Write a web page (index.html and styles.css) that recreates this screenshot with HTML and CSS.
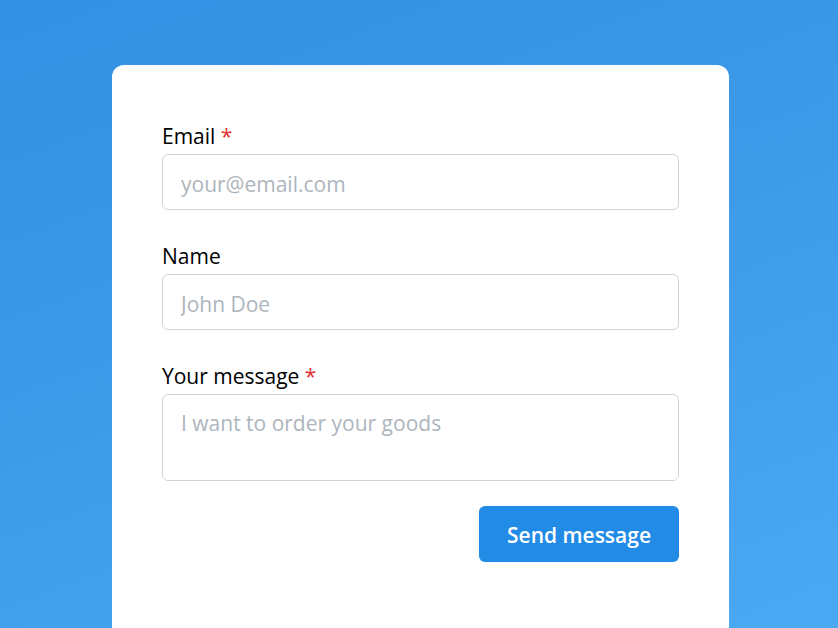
FILE: index.html
```html
<!DOCTYPE html>
<html lang="en">
<head>
<meta charset="utf-8">
<title>Contact form</title>
<link rel="stylesheet" href="styles.css">
</head>
<body>
<main class="page">
  <form class="card">
    <div class="field">
      <label class="label" for="email">Email <span class="req">*</span></label>
      <input class="input" id="email" type="text" placeholder="your@email.com">
    </div>
    <div class="field">
      <label class="label" for="name">Name</label>
      <input class="input" id="name" type="text" placeholder="John Doe">
    </div>
    <div class="field">
      <label class="label" for="msg">Your message <span class="req">*</span></label>
      <textarea class="input textarea" id="msg" placeholder="I want to order your goods"></textarea>
    </div>
    <div class="actions">
      <button class="btn" type="button">Send message</button>
    </div>
  </form>
</main>
</body>
</html>
```
FILE: styles.css
```css
* { box-sizing: border-box; }
html, body { margin: 0; height: 100%; }
body {
  font-family: "Open Sans", "Noto Sans", sans-serif;
  background: linear-gradient(160deg, #3390e3 0%, #3d9ae8 45%, #4ba8f3 100%);
  overflow: hidden;
}
.page {
  display: flex;
  justify-content: center;
  padding-top: 65px;
  height: 100vh;
}
.card {
  width: 617px;
  margin-left: 3px;
  background: #fff;
  border-radius: 12px 12px 0 0;
  padding: 56px 50px 0;
  display: flex;
  flex-direction: column;
  gap: 31px;
}
.field { display: flex; flex-direction: column; }
.label {
  font-size: 21px;
  line-height: 31px;
  color: #000;
  margin-bottom: 2px;
}
.req { color: #e03131; }
.input {
  height: 56px;
  border: 1px solid #ced4da;
  border-radius: 6px;
  padding: 3px 18px 0;
  font-family: inherit;
  font-size: 21px;
  color: #000;
  background: #fff;
  outline: none;
}
.input::placeholder { color: #adb5bd; }
.textarea {
  height: 87px;
  resize: none;
  padding-top: 13px;
  line-height: 31px;
}
.actions {
  display: flex;
  justify-content: flex-end;
  margin-top: -6px;
}
.btn {
  width: 200px;
  height: 56px;
  border: 0;
  border-radius: 6px;
  background: #228be6;
  color: #fff;
  font-family: inherit;
  font-size: 21px;
  font-weight: 600;
  padding-top: 2px;
  cursor: pointer;
}
```
